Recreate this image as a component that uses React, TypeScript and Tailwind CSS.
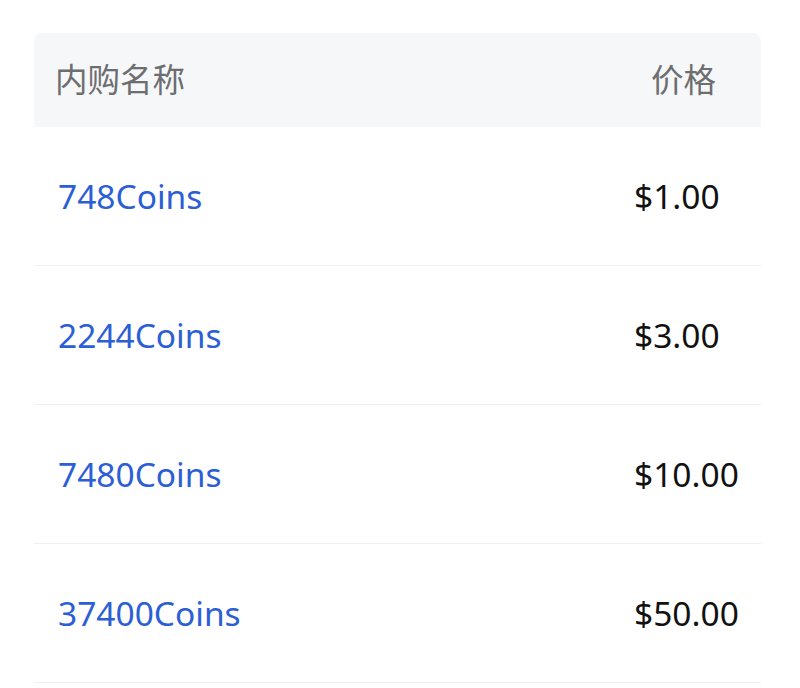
const items = [
  ["748Coins", "$1.00"],
  ["2244Coins", "$3.00"],
  ["7480Coins", "$10.00"],
  ["37400Coins", "$50.00"],
];

export default function App() {
  return (
    <div className="h-[688px] w-[800px] bg-white pt-[33px] pl-[34px] font-['Noto_Sans','Noto_Sans_CJK_SC',sans-serif]">
      <div className="w-[727px]">
        <div className="grid h-[94px] grid-cols-[1fr_127px] items-center rounded-t-lg bg-[#f6f7f9] text-[32.5px] text-[#6d6e70]">
          <div className="pl-[21px]">内购名称</div>
          <div className="pl-[17px]">价格</div>
        </div>
        {items.map(([name, price]) => (
          <div
            key={name}
            className="grid h-[139px] grid-cols-[1fr_127px] items-center border-b border-[#f0f0f0] pt-px text-[33.5px]"
          >
            <div className="pl-[24px] text-[#2c5ed6]">{name}</div>
            <div className="text-[#111]">{price}</div>
          </div>
        ))}
      </div>
    </div>
  );
}
